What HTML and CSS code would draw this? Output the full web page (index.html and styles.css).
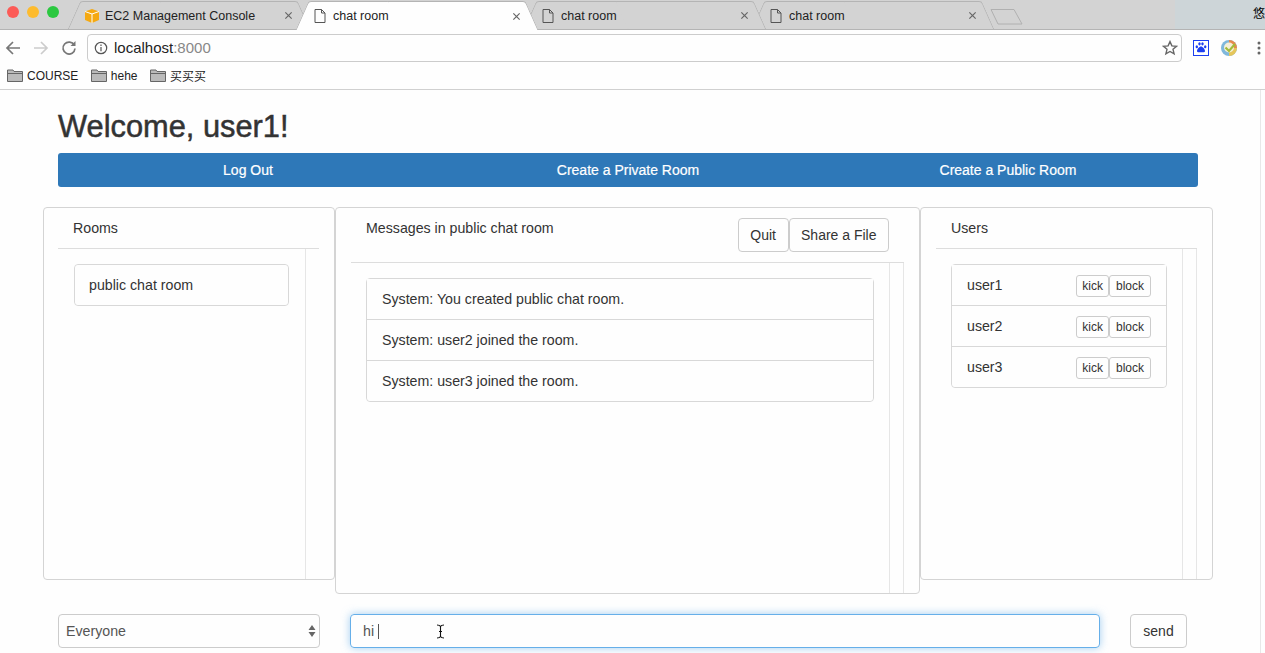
FILE: index.html
```html
<!DOCTYPE html>
<html lang="en">
<head>
    <meta charset="UTF-8">
    <title>chat room</title>
    <link rel="stylesheet" href="styles.css">
</head>
<body>
    <div class="tabstrip">
        <div class="lights">
            <span class="light red"></span>
            <span class="light yellow"></span>
            <span class="light green"></span>
        </div>
        <div class="tab">
            <svg class="tab-icon" viewBox="0 0 16 16"><path d="M8 1 15 3.500V12L8 15 1 12V3.500Z" fill="#f5a911"/><path d="M1 3.500 8 6l7-2.500M8 6v9" fill="none" stroke="#fff" stroke-width="1"/></svg>
            <span class="tab-title">EC2 Management Console</span>
            <svg class="tab-close" viewBox="0 0 10 10"><path d="M1.500 1.500l7 7M8.500 1.500l-7 7"/></svg>
        </div>
        <div class="tab active">
            <svg class="tab-icon" viewBox="0 0 16 16"><path class="page-icon" d="M3 1.500h6.500l3.500 3.500v9.500H3zM9.500 1.500V5H13"/></svg>
            <span class="tab-title">chat room</span>
            <svg class="tab-close" viewBox="0 0 10 10"><path d="M1.500 1.500l7 7M8.500 1.500l-7 7"/></svg>
        </div>
        <div class="tab">
            <svg class="tab-icon" viewBox="0 0 16 16"><path class="page-icon" d="M3 1.500h6.500l3.500 3.500v9.500H3zM9.500 1.500V5H13"/></svg>
            <span class="tab-title">chat room</span>
            <svg class="tab-close" viewBox="0 0 10 10"><path d="M1.500 1.500l7 7M8.500 1.500l-7 7"/></svg>
        </div>
        <div class="tab">
            <svg class="tab-icon" viewBox="0 0 16 16"><path class="page-icon" d="M3 1.500h6.500l3.500 3.500v9.500H3zM9.500 1.500V5H13"/></svg>
            <span class="tab-title">chat room</span>
            <svg class="tab-close" viewBox="0 0 10 10"><path d="M1.500 1.500l7 7M8.500 1.500l-7 7"/></svg>
        </div>
        <svg class="new-tab" viewBox="0 0 33 17"><path d="M1 1.500H24L32 16H8Z"/></svg>
        <div class="profile">悠</div>
    </div>

    <div class="toolbar">
        <svg class="nav-icon" viewBox="0 0 16 16"><path d="M15 8H2M8 2 2 8l6 6" stroke="#777"/></svg>
        <svg class="nav-icon" viewBox="0 0 16 16"><path d="M1 8h13M8 2l6 6-6 6" stroke="#ccc"/></svg>
        <svg class="nav-icon" viewBox="0 0 16 16"><path d="M13.300 5.200A6 6 0 1 0 14 8.500" stroke="#777"/><path d="M14.500 1v5h-5z" fill="#777"/></svg>
        <div class="omnibox">
            <svg class="info-icon" viewBox="0 0 14 14"><circle cx="7" cy="7" r="5.700"/><path d="M7 6v4.200M7 3.500v1.400"/></svg>
            <span class="host">localhost</span><span class="port">:8000</span>
            <svg class="star-icon" viewBox="0 0 16 16"><path d="M8 1.600l1.900 4.300 4.600.4-3.500 3 1.100 4.600L8 11.500l-4.100 2.400L5 9.300l-3.500-3 4.600-.4z"/></svg>
        </div>
        <svg class="ext-icon" viewBox="0 0 16 16"><rect width="16" height="16" fill="#1c3ff0"/><rect x="1" y="1" width="14" height="14" fill="#fff"/><g fill="#1c3ff0"><ellipse cx="3.800" cy="6.800" rx="1.200" ry="1.500"/><ellipse cx="6.500" cy="3.800" rx="1.200" ry="1.600"/><ellipse cx="9.500" cy="3.800" rx="1.200" ry="1.600"/><ellipse cx="12.200" cy="6.800" rx="1.200" ry="1.500"/><path d="M8 6.500c1.700 0 4 2.700 4 4.500 0 1.900-2.600 1.200-4 1.200s-4 .7-4-1.200c0-1.800 2.300-4.500 4-4.500z"/></g></svg>
        <svg class="ext-icon" viewBox="0 0 16 16"><circle cx="8" cy="8" r="8" fill="#7fb8dc"/><path d="M8 0a8 8 0 0 1 8 8H8z" fill="#e9894b"/><path d="M16 8a8 8 0 0 1-8 8V8z" fill="#e6c65a"/><circle cx="8" cy="7.500" r="5" fill="#f4efd8"/><path d="M4.500 7.500 8 11l6-7" fill="none" stroke="#a3bb3a" stroke-width="2.200"/></svg>
        <svg class="kebab" viewBox="0 0 4 14"><circle cx="2" cy="2" r="1.500"/><circle cx="2" cy="7" r="1.500"/><circle cx="2" cy="12" r="1.500"/></svg>
    </div>

    <div class="bookmarks">
        <div class="bookmark">
            <svg class="folder" viewBox="0 0 16 13"><path d="M.5 12.500V1h5.500l1 1.500h8.500v10z"/><path d="M.5 4.500h15"/></svg>
            COURSE
        </div>
        <div class="bookmark">
            <svg class="folder" viewBox="0 0 16 13"><path d="M.5 12.500V1h5.500l1 1.500h8.500v10z"/><path d="M.5 4.500h15"/></svg>
            hehe
        </div>
        <div class="bookmark">
            <svg class="folder" viewBox="0 0 16 13"><path d="M.5 12.500V1h5.500l1 1.500h8.500v10z"/><path d="M.5 4.500h15"/></svg>
            买买买
        </div>
    </div>

    <div class="viewport">
        <div class="page">
            <h1 class="welcome">Welcome, user1!</h1>
            <div class="actions">
                <a class="action">Log Out</a>
                <a class="action">Create a Private Room</a>
                <a class="action">Create a Public Room</a>
            </div>

            <div class="panels">
                <div class="panel rooms">
                    <div class="panel-head">Rooms</div>
                    <div class="panel-body">
                        <div class="list-wrap">
                            <div class="list">
                                <div class="list-item">public chat room</div>
                            </div>
                        </div>
                    </div>
                </div>

                <div class="panel messages">
                    <div class="panel-head head-buttons">
                        <span>Messages in public chat room</span>
                        <div class="btn-group">
                            <button class="btn">Quit</button>
                            <button class="btn">Share a File</button>
                        </div>
                    </div>
                    <div class="panel-body outer-line">
                        <div class="list-wrap">
                            <div class="list">
                                <div class="list-item">System: You created public chat room.</div>
                                <div class="list-item">System: user2 joined the room.</div>
                                <div class="list-item">System: user3 joined the room.</div>
                            </div>
                        </div>
                    </div>
                </div>

                <div class="panel users">
                    <div class="panel-head">Users</div>
                    <div class="panel-body outer-line">
                        <div class="list-wrap">
                            <div class="list">
                                <div class="list-item user-row">
                                    <span>user1</span>
                                    <div class="btn-group"><button class="btn btn-xs">kick</button><button class="btn btn-xs">block</button></div>
                                </div>
                                <div class="list-item user-row">
                                    <span>user2</span>
                                    <div class="btn-group"><button class="btn btn-xs">kick</button><button class="btn btn-xs">block</button></div>
                                </div>
                                <div class="list-item user-row">
                                    <span>user3</span>
                                    <div class="btn-group"><button class="btn btn-xs">kick</button><button class="btn btn-xs">block</button></div>
                                </div>
                            </div>
                        </div>
                    </div>
                </div>
            </div>

            <div class="composer">
                <div class="select">
                    <span>Everyone</span>
                    <svg class="select-arrows" viewBox="0 0 8 14"><path d="M4 1 7.500 6H.5zM4 13 .5 8h7z"/></svg>
                </div>
                <div class="message-input">
                    <span>hi</span><span class="caret"></span>
                    <svg class="ibeam" viewBox="0 0 9 15"><path d="M1 1c2 0 3 .5 3.500 1.500C5 1.500 6 1 8 1M1 14c2 0 3-.5 3.500-1.500C5 13.500 6 14 8 14M4.500 2.500v10M3 7.500h3"/></svg>
                </div>
                <button class="btn send">send</button>
            </div>
        </div>
        <div class="scrollbar"></div>
    </div>
</body>
</html>
```

FILE: styles.css
```css
html, body {
    margin: 0;
    height: 653px;
    overflow: hidden;
}

body {
    font-family: "Liberation Sans", Arial, "Noto Sans CJK SC", sans-serif;
    font-size: 14.200px;
    color: #333;
    background-color: #fefefe;
}

/* browser chrome */
.tabstrip {
    display: flex;
    height: 30px;
    background-color: #d3d3d3;
    box-shadow: inset 0 -1px 0 #b4b4b4;
    overflow: hidden;
}

.lights {
    display: flex;
    gap: 8px;
    width: 74px;
    padding: 6px 0 0 7px;
    box-sizing: border-box;
    flex: none;
}

.light {
    width: 12px;
    height: 12px;
    border-radius: 50%;
}

.red { background-color: #fc5b57; }
.yellow { background-color: #fdbb2e; }
.green { background-color: #2bc840; }

.tab {
    display: flex;
    align-items: center;
    width: 230px;
    height: 28px;
    margin: 1px -2px 0 0;
    padding: 1px 11px 0 10px;
    box-sizing: border-box;
    position: relative;
    flex: none;
    color: #222;
    font-size: 12.500px;
    z-index: 1;
}

.tab:nth-child(5) {
    z-index: 0;
}

.tab::before,
.tab::after {
    content: "";
    position: absolute;
    top: 0;
    bottom: 0;
    width: 60%;
    background-color: #d3d3d3;
    border-top: 1px solid #b4b4b4;
    box-sizing: border-box;
    z-index: 0;
}

.tab::before {
    left: 0;
    border-left: 1px solid #b4b4b4;
    border-top-left-radius: 3px;
    transform: skewX(-24deg);
}

.tab::after {
    right: 0;
    border-right: 1px solid #b4b4b4;
    border-top-right-radius: 3px;
    transform: skewX(24deg);
}

.tab.active {
    z-index: 2;
    height: 29px;
}

.tab.active::before,
.tab.active::after {
    background-color: #fefefe;
}

.tab-icon {
    width: 16px;
    height: 16px;
    flex: none;
    margin-right: 5px;
    position: relative;
    z-index: 1;
}

.page-icon {
    fill: none;
    stroke: #555;
    stroke-width: 1;
}

.tab-title {
    flex: 1;
    position: relative;
    z-index: 1;
    white-space: nowrap;
}

.tab-close {
    width: 9px;
    height: 9px;
    flex: none;
    position: relative;
    z-index: 1;
}

.tab-close path {
    fill: none;
    stroke: #666;
    stroke-width: 1.300;
}

.new-tab {
    width: 33px;
    height: 17px;
    margin: 8px 0 0 4px;
    flex: none;
}

.new-tab path {
    fill: #d3d3d3;
    stroke: #b0b0b0;
}

.profile {
    margin-left: auto;
    width: 90px;
    height: 29px;
    padding: 4px 0 0 78px;
    box-sizing: border-box;
    background-color: #cdd5d8;
    color: #000;
    font-size: 12px;
    white-space: nowrap;
    flex: none;
}

.toolbar {
    display: flex;
    align-items: center;
    height: 35px;
    padding: 0 5px;
    box-sizing: border-box;
    background-color: #fefefe;
}

.nav-icon {
    width: 16px;
    height: 16px;
    margin-right: 12px;
    flex: none;
}

.nav-icon path {
    fill: none;
    stroke-width: 1.700;
}

.nav-icon path[fill] {
    fill: #777;
    stroke: none;
}

.omnibox {
    display: flex;
    align-items: center;
    width: 1095px;
    height: 28px;
    margin: 0 11px 0 -2px;
    padding: 0 3px 0 6px;
    box-sizing: border-box;
    border: 1px solid #ccc;
    border-radius: 4px;
    font-size: 15px;
    flex: none;
}

.info-icon {
    width: 14px;
    height: 14px;
    margin-right: 6px;
    flex: none;
}

.info-icon circle,
.info-icon path {
    fill: none;
    stroke: #555;
    stroke-width: 1.200;
}

.host { color: #222; }
.port { color: #888; }

.star-icon {
    width: 16px;
    height: 16px;
    margin-left: auto;
    flex: none;
}

.star-icon path {
    fill: none;
    stroke: #666;
    stroke-width: 1.400;
}

.ext-icon {
    width: 16px;
    height: 16px;
    margin-right: 12px;
    flex: none;
}

.kebab {
    width: 4px;
    height: 14px;
    margin-left: 8px;
    fill: #666;
    flex: none;
}

.bookmarks {
    display: flex;
    align-items: center;
    gap: 12.500px;
    height: 25px;
    padding: 0 7px 3px;
    box-sizing: border-box;
    border-bottom: 1px solid #d0d0d0;
    background-color: #fefefe;
    color: #222;
    font-size: 12px;
}

.bookmark {
    display: flex;
    align-items: center;
    gap: 4px;
}

.folder {
    width: 16px;
    height: 13px;
    flex: none;
}

.folder path {
    fill: #bbb;
    stroke: #666;
    stroke-width: 1;
}

/* page */
.viewport {
    display: flex;
    height: 563px;
}

.page {
    flex: 1;
    padding: 0 0 0 43px;
    overflow: hidden;
}

.scrollbar {
    width: 4px;
    flex: none;
    border-left: 1px solid #e8e8e8;
}

.welcome {
    margin: 20px 0 10px 15px;
    font-size: 30.800px;
    font-weight: normal;
    line-height: 33px;
    color: #333;
    -webkit-text-stroke: 0.5px #333;
}

.actions {
    display: flex;
    width: 1140px;
    height: 34px;
    margin-left: 15px;
    background-color: #2e78b8;
    border-radius: 3px;
}

.action {
    flex: 1;
    text-align: center;
    font-size: 14px;
    line-height: 34px;
    color: #fff;
    -webkit-text-stroke: 0.2px #fff;
}

.panels {
    display: flex;
    align-items: flex-start;
    margin-top: 20px;
}

.panel {
    height: 373px;
    padding: 0 15px 0 14px;
    box-sizing: border-box;
    border: 1px solid #d4d4d4;
    border-radius: 4px;
    background-color: #fefefe;
    flex: none;
}

.rooms { width: 292px; }

.messages {
    width: 585px;
    height: 387px;
    padding-left: 15px;
}

.users {
    width: 293px;
    padding-left: 15px;
}

.panel-head {
    padding: 10px 15px;
    line-height: 20px;
    border-bottom: 1px solid #ddd;
}

.head-buttons {
    display: flex;
    justify-content: space-between;
    align-items: flex-start;
    height: 55px;
    box-sizing: border-box;
}

.panel-body {
    height: 330px;
    box-sizing: border-box;
}

.list-wrap {
    height: 100%;
    margin-right: 13px;
    padding: 15px;
    box-sizing: border-box;
    border-right: 1px solid #e6e6e6;
}

.rooms .list-wrap {
    padding: 15px 16px;
}

.rooms .list-item {
    padding-left: 14px;
}

.outer-line {
    border-right: 1px solid #e6e6e6;
}

.list {
    border: 1px solid #d8d8d8;
    border-radius: 4px;
}

.list-item {
    height: 40px;
    padding: 0 15px;
    line-height: 40px;
    border-bottom: 1px solid #d8d8d8;
    background-color: #fefefe;
}

.list-item:last-child {
    border-bottom: none;
    border-radius: 4px;
}

.user-row {
    display: flex;
    justify-content: space-between;
    align-items: center;
}

.btn-group {
    display: flex;
}

.btn {
    height: 34px;
    padding: 0 11.500px;
    font-family: inherit;
    font-size: 14px;
    color: #333;
    background-color: #fefefe;
    border: 1px solid #ccc;
    border-radius: 4px;
}

.btn-xs {
    height: 22px;
    margin-top: 1px;
    padding: 0 5px;
    font-size: 12px;
    border-radius: 3px;
}

.btn-xs + .btn-xs {
    padding: 0 6px;
}

.composer {
    display: flex;
    margin: 20px 0 0 15px;
}

.select {
    display: flex;
    justify-content: space-between;
    align-items: center;
    width: 262px;
    height: 34px;
    padding: 0 3px 0 7px;
    box-sizing: border-box;
    border: 1px solid #ccc;
    border-radius: 4px;
    color: #555;
}

.select-arrows {
    width: 8px;
    height: 14px;
    fill: #666;
}

.message-input {
    display: flex;
    align-items: center;
    width: 750px;
    height: 34px;
    margin-left: 30px;
    padding: 0 12px;
    box-sizing: border-box;
    border: 1px solid #66afe9;
    border-radius: 4px;
    box-shadow: 0 0 8px rgba(102, 175, 233, 0.6);
    color: #555;
    position: relative;
}

.caret {
    width: 1px;
    height: 15px;
    margin-left: 4px;
    background-color: #555;
}

.ibeam {
    position: absolute;
    left: 85px;
    top: 9px;
    width: 9px;
    height: 15px;
    fill: none;
    stroke: #111;
    stroke-width: 1.100;
}

.send {
    width: 57px;
    margin-left: 30px;
    padding: 0;
}
```
